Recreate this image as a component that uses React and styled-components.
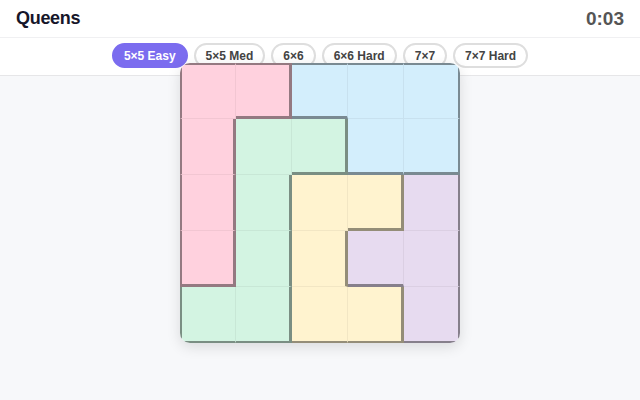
import React from "react";
import styled, { createGlobalStyle } from "styled-components";

const GlobalStyle = createGlobalStyle`
  html, body {
    margin: 0;
    padding: 0;
    background: #f7f8fa;
    font-family: "Liberation Sans", Arial, sans-serif;
  }
`;

const Page = styled.div`
  width: 640px;
  height: 400px;
  display: flex;
  flex-direction: column;
  background: #f7f8fa;
  overflow: hidden;
`;

const Header = styled.header`
  height: 37px;
  display: flex;
  align-items: center;
  justify-content: space-between;
  padding: 0 16px;
  background: #fff;
  border-bottom: 1px solid #f0f0f2;
  box-shadow: 0 1px 3px rgba(0, 0, 0, 0.03);
`;

const Title = styled.h1`
  margin: 0;
  font-size: 18px;
  font-weight: 700;
  color: #16162a;
  letter-spacing: -0.3px;
`;

const Timer = styled.span`
  font-size: 19px;
  font-weight: 600;
  color: #555;
  font-variant-numeric: tabular-nums;
`;

const TabBar = styled.nav`
  height: 38px;
  display: flex;
  justify-content: center;
  align-items: flex-start;
  gap: 6px;
  padding-top: 5px;
  box-sizing: border-box;
  background: #fff;
  border-bottom: 1px solid #e6e6e8;
`;

const Tab = styled.button`
  height: 25px;
  padding: 0 10px;
  border-radius: 13px;
  border: 2px solid ${(p) => (p.$active ? "#7b6cef" : "#dedede")};
  background: ${(p) => (p.$active ? "#7b6cef" : "#fff")};
  color: ${(p) => (p.$active ? "#fff" : "#444")};
  font-family: "Liberation Sans", Arial, sans-serif;
  font-size: 12px;
  font-weight: 700;
  cursor: pointer;
`;

const Main = styled.main`
  flex: 1;
  display: flex;
  justify-content: center;
  align-items: flex-start;
`;

const Board = styled.div`
  position: relative;
  z-index: 1;
  margin-top: -13px;
  width: 280px;
  height: 280px;
  display: grid;
  grid-template-columns: repeat(5, 56px);
  grid-template-rows: repeat(5, 56px);
  border-radius: 10px;
  overflow: hidden;
  box-shadow: 0 4px 14px rgba(0, 0, 0, 0.12);
`;

const colors = {
  P: "#ffd1de",
  B: "#d3eefc",
  G: "#d3f4e2",
  Y: "#fff3cf",
  V: "#e7dbf0",
};

const thick = "rgba(0, 0, 0, 0.42)";
const thin = "rgba(0, 0, 0, 0.05)";

const Cell = styled.div`
  box-sizing: border-box;
  background: ${(p) => colors[p.$region]};
  border-top: ${(p) => p.$top};
  border-left: ${(p) => p.$left};
  border-right: ${(p) => p.$right};
  border-bottom: ${(p) => p.$bottom};
`;

const layout = ["PPBBB", "PGGBB", "PGYYV", "PGYVV", "GGYYV"];

const edge = (r, c) => {
  const here = layout[r][c];
  const outer = `2px solid ${thick}`;
  const right =
    c === 4 ? outer : layout[r][c + 1] !== here ? `3px solid ${thick}` : `1px solid ${thin}`;
  const bottom =
    r === 4 ? outer : layout[r + 1][c] !== here ? `3px solid ${thick}` : `1px solid ${thin}`;
  return {
    $top: r === 0 ? outer : "none",
    $left: c === 0 ? outer : "none",
    $right: right,
    $bottom: bottom,
  };
};

const tabs = ["5×5 Easy", "5×5 Med", "6×6", "6×6 Hard", "7×7", "7×7 Hard"];

export default function App() {
  return (
    <Page>
      <GlobalStyle />
      <Header>
        <Title>Queens</Title>
        <Timer>0:03</Timer>
      </Header>
      <TabBar>
        {tabs.map((t, i) => (
          <Tab key={t} $active={i === 0}>
            {t}
          </Tab>
        ))}
      </TabBar>
      <Main>
        <Board>
          {layout.map((row, r) =>
            row.split("").map((region, c) => (
              <Cell key={`${r}-${c}`} $region={region} {...edge(r, c)} />
            ))
          )}
        </Board>
      </Main>
    </Page>
  );
}
